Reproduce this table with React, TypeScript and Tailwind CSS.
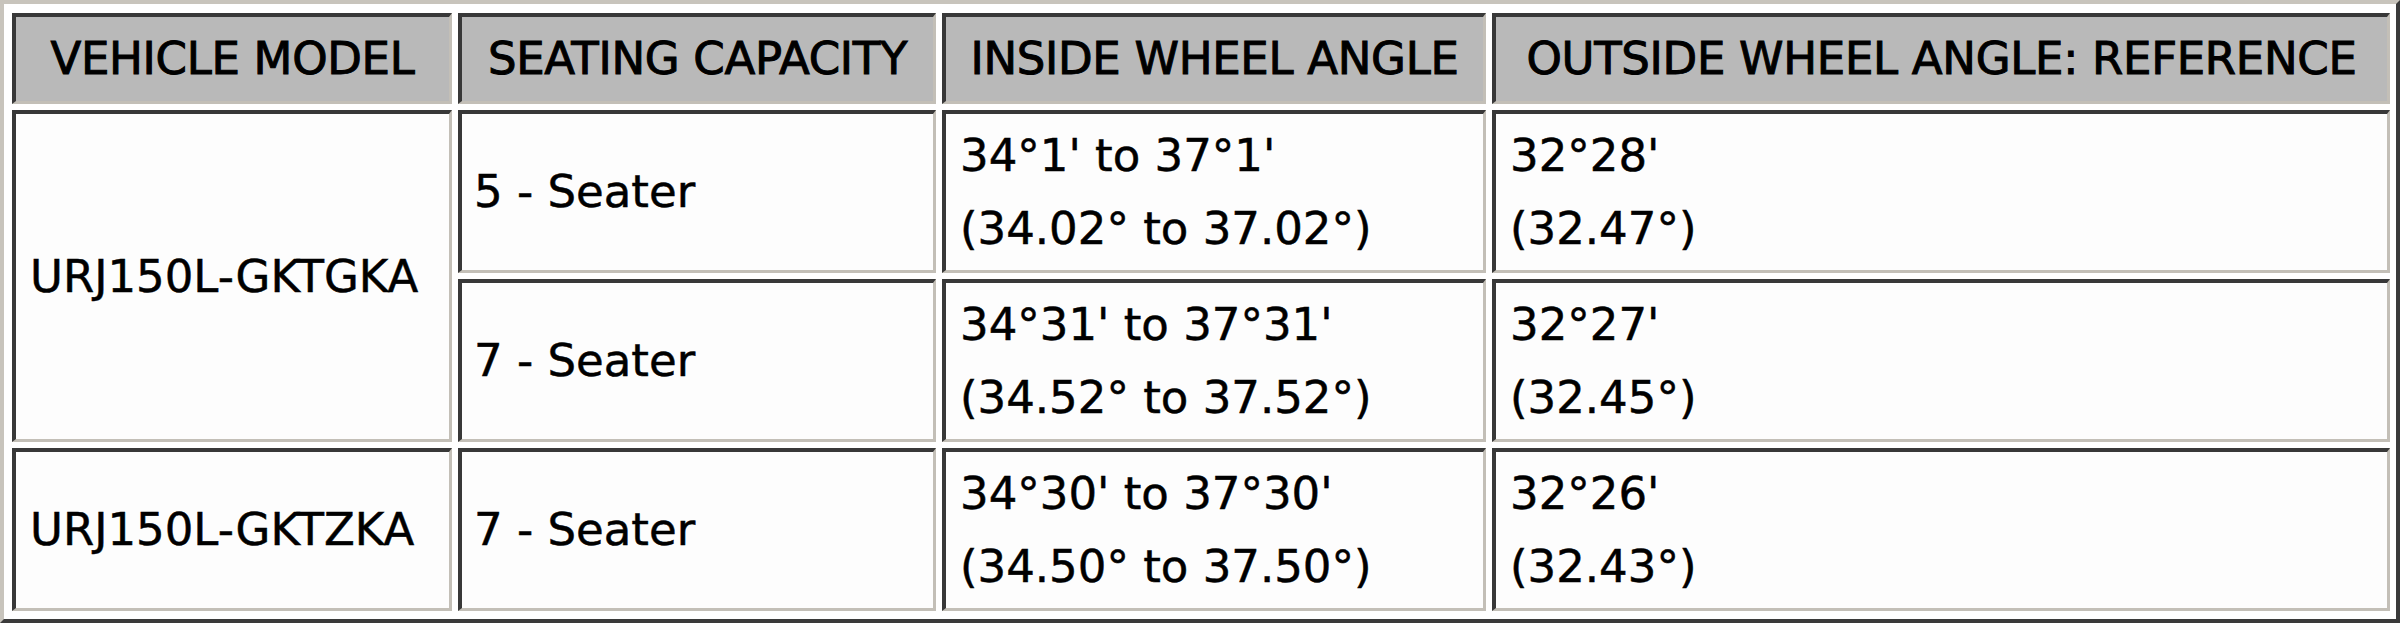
const rows = [
  {
    model: "URJ150L-GKTGKA",
    span: 2,
    items: [
      {
        seats: "5 - Seater",
        inside: ["34°1' to 37°1'", "(34.02° to 37.02°)"],
        outside: ["32°28'", "(32.47°)"],
      },
      {
        seats: "7 - Seater",
        inside: ["34°31' to 37°31'", "(34.52° to 37.52°)"],
        outside: ["32°27'", "(32.45°)"],
      },
    ],
  },
  {
    model: "URJ150L-GKTZKA",
    span: 1,
    items: [
      {
        seats: "7 - Seater",
        inside: ["34°30' to 37°30'", "(34.50° to 37.50°)"],
        outside: ["32°26'", "(32.43°)"],
      },
    ],
  },
];

const headers = [
  "VEHICLE MODEL",
  "SEATING CAPACITY",
  "INSIDE WHEEL ANGLE",
  "OUTSIDE WHEEL ANGLE: REFERENCE",
];

const cell =
  "border-t-4 border-l-4 border-r-[3px] border-b-[3px] border-t-[#383838] border-l-[#383838] border-r-[#c3bfb7] border-b-[#c3bfb7]";

function Lines({ lines }: { lines: string[] }) {
  return (
    <div className={`${cell} bg-[#fdfdfd] flex flex-col justify-center pl-[14px] leading-[73px]`}>
      {lines.map((l) => (
        <span key={l}>{l}</span>
      ))}
    </div>
  );
}

export default function App() {
  return (
    <div className="w-[2400px] h-[623px] bg-white font-['DejaVu_Sans',sans-serif] text-black">
      <div className="h-full border-4 border-t-[#c8c4bc] border-l-[#c8c4bc] border-r-[#3a3a3a] border-b-[#3a3a3a] pl-[8px] pt-[9px] pr-[6px] pb-[8px]">
        <div className="grid grid-cols-[440px_478px_544px_898px] grid-rows-[91px_163px_163px_163px] gap-[6px] text-[45px] [-webkit-text-stroke:0.5px_#000]">
          {/* header */}
          {headers.map((h) => (
            <div
              key={h}
              className={`${cell} bg-[#b9b9b9] flex items-center justify-center text-[45px] tracking-[-0.3px] [-webkit-text-stroke:1px_#000]`}
            >
              {h}
            </div>
          ))}

          {/* body */}
          {rows.map((r) =>
            r.items.map((it, i) => (
              <>
                {i === 0 && (
                  <div
                    key={r.model}
                    className={`${cell} bg-[#fdfdfd] flex items-center pl-[14px] ${
                      r.span === 2 ? "row-span-2" : ""
                    }`}
                  >
                    {r.model}
                  </div>
                )}
                <div className={`${cell} bg-[#fdfdfd] flex items-center pl-[12px]`}>
                  {it.seats}
                </div>
                <Lines lines={it.inside} />
                <Lines lines={it.outside} />
              </>
            ))
          )}
        </div>
      </div>
    </div>
  );
}
